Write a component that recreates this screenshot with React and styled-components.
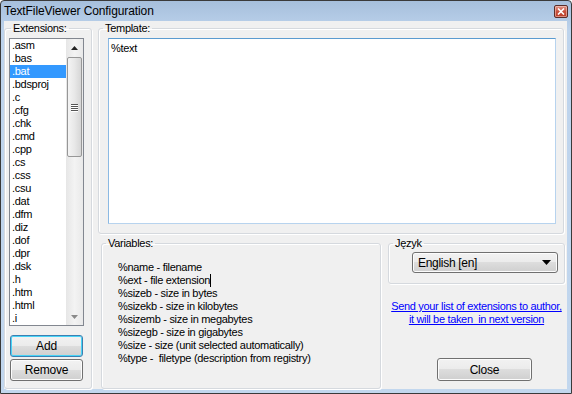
import React from "react";
import styled, { createGlobalStyle } from "styled-components";

const GlobalStyle = createGlobalStyle`
  html, body {
    margin: 0;
    padding: 0;
    background: #ffffff;
  }
  body {
    font-family: "Liberation Sans", Arial, sans-serif;
    font-size: 11px;
    letter-spacing: -0.3px;
    color: #000;
  }
`

const Window = styled.div`
  width: 572px;
  height: 394px;
  box-sizing: border-box;
  border: 1px solid #3a3a3a;
  border-radius: 4px 4px 0 0;
  background: linear-gradient(#a6bfdc, #bdd3ec 30px, #c2d7ee);
  display: flex;
  flex-direction: column;
  overflow: hidden;
`

const TitleBar = styled.div`
  height: 20px;
  display: flex;
  align-items: center;
  justify-content: space-between;
  padding: 0 3px 0 3px;
  font-size: 12px;
  letter-spacing: -0.1px;
  color: #000;
`

const CloseBox = styled.div`
  width: 14px;
  height: 13px;
  box-sizing: border-box;
  border: 1px solid #5b2e2a;
  border-radius: 2px;
  background: linear-gradient(#e0978b, #c8513d 50%, #b93c28);
  box-shadow: inset 0 0 0 1px rgba(255, 220, 210, 0.5);
  display: flex;
  align-items: center;
  justify-content: center;
  margin-top: 1px;
`

const Client = styled.div`
  flex: 1;
  margin: 0 4px 4px 3px;
  background: #f0f0f0;
  display: flex;
  padding-top: 1px;
  box-sizing: border-box;
`

const RightColumn = styled.div`
  margin-left: 6px;
  display: flex;
  flex-direction: column;
`

const Group = styled.fieldset`
  margin: 0 0 0 ${p => p.$ml || 0}px;
  padding: 0;
  min-width: 0;
  box-sizing: border-box;
  border: 1px solid #d5d9de;
  border-radius: 3px;
  box-shadow: inset 1px 1px 0 #fff, 1px 1px 0 #fff;
  width: ${p => p.$w}px;
  height: ${p => p.$h}px;
  display: flex;
  flex-direction: column;
`

const Legend = styled.legend`
  margin-left: ${p => p.$ml || 5}px;
  padding: 0 2px;
  line-height: 13px;
  font-size: 11px;
`

const Inner = styled.div`
  padding: ${p => p.$pad};
  display: flex;
  flex-direction: column;
  flex: 1;
`

const ListBox = styled.div`
  width: 75px;
  height: 288px;
  box-sizing: border-box;
  border: 1px solid #828790;
  background: #fff;
  display: flex;
`

const Items = styled.div`
  flex: 1;
  display: flex;
  flex-direction: column;
`

const Item = styled.div`
  height: 13px;
  line-height: 13px;
  padding-left: 2px;
  background: ${p => (p.$sel ? "#3399ff" : "transparent")};
  color: ${p => (p.$sel ? "#fff" : "#000")};
`

const ScrollBar = styled.div`
  width: 17px;
  background: linear-gradient(90deg, #e6e6e6, #f3f3f3 50%, #e9e9e9);
  display: flex;
  flex-direction: column;
  align-items: center;
`

const Arrow = styled.div`
  height: 17px;
  display: flex;
  align-items: center;
  justify-content: center;
`

const Track = styled.div`
  flex: 1;
  width: 100%;
  display: flex;
  flex-direction: column;
  align-items: center;
`

const Thumb = styled.div`
  width: 15px;
  height: 100px;
  margin-top: 1px;
  box-sizing: border-box;
  border: 1px solid #979797;
  border-radius: 2px;
  background: linear-gradient(90deg, #f4f4f4, #e8e8e8 50%, #d6d6d6);
  display: flex;
  flex-direction: column;
  align-items: center;
  justify-content: center;
  gap: 1px;
`

const Grip = styled.div`
  width: 7px;
  height: 1px;
  background: #555;
  box-shadow: 0 1px 0 #fff;
`

const Button = styled.button`
  box-sizing: border-box;
  width: ${p => p.$w}px;
  height: ${p => p.$h}px;
  margin: ${p => p.$m || 0};
  padding: 0;
  font-family: "Liberation Sans", Arial, sans-serif;
  font-size: 12px;
  letter-spacing: -0.2px;
  color: #000;
  border: 1px solid ${p => (p.$def ? "#3c7fb1" : "#707070")};
  border-radius: 3px;
  background: linear-gradient(#f2f2f2, #ebebeb 50%, #dddddd 50%, #cfcfcf);
  box-shadow: inset 0 0 0 1px ${p => (p.$def ? "#48d4f7" : "#fcfcfc")};
`

const TextArea = styled.div`
  width: 448px;
  height: 186px;
  box-sizing: border-box;
  background: #fff;
  border: 1px solid #b7d3ee;
  border-top-color: #5b9bd0;
  border-left-color: #8bb9e3;
  padding: 3px 2px;
  line-height: 13px;
`

const BottomRow = styled.div`
  display: flex;
  margin-top: 3px;
`

const VarLine = styled.div`
  height: 13px;
  line-height: 13px;
  white-space: pre;
`

const Caret = styled.span`
  display: inline-block;
  width: 1px;
  height: 13px;
  background: #000;
  vertical-align: top;
`

const SidePanel = styled.div`
  width: 177px;
  height: 152px;
  margin-left: 7px;
  display: flex;
  flex-direction: column;
`

const Select = styled.div`
  width: 146px;
  height: 21px;
  box-sizing: border-box;
  border: 1px solid #707070;
  border-radius: 3px;
  background: linear-gradient(#f2f2f2, #ebebeb 50%, #dddddd 50%, #cfcfcf);
  box-shadow: inset 0 0 0 1px #fcfcfc;
  display: flex;
  align-items: center;
  justify-content: space-between;
  padding: 0 6px 0 5px;
  font-size: 12px;
`

const Link = styled.a`
  margin-top: 16px;
  color: #0000ff;
  text-decoration: underline;
  text-align: center;
  line-height: 13px;
  white-space: pre;
  font-size: 11px;
  letter-spacing: -0.33px;
  cursor: pointer;
`

const extensions = [
  ".asm", ".bas", ".bat", ".bdsproj", ".c", ".cfg", ".chk", ".cmd", ".cpp",
  ".cs", ".css", ".csu", ".dat", ".dfm", ".diz", ".dof", ".dpr", ".dsk",
  ".h", ".htm", ".html", ".i",
]

const variables = [
  "%name - filename",
  "%ext - file extension",
  "%sizeb - size in bytes",
  "%sizekb - size in kilobytes",
  "%sizemb - size in megabytes",
  "%sizegb - size in gigabytes",
  "%size - size (unit selected automatically)",
  "%type -  filetype (description from registry)",
]

function App() {
  return (
    <>
      <GlobalStyle />
      <Window>
        <TitleBar>
          <span>TextFileViewer Configuration</span>
          <CloseBox>
            <svg width="8" height="7" viewBox="0 0 8 7">
              <path d="M1 0.5 L7 6.5 M7 0.5 L1 6.5" stroke="#fff" strokeWidth="1.6" />
            </svg>
          </CloseBox>
        </TitleBar>
        <Client>
          <Group $w={88} $h={367}>
            <Legend $ml={6}>Extensions:</Legend>
            <Inner $pad="3px 0 0 4px">
              <ListBox>
                <Items>
                  {extensions.map(e => (
                    <Item key={e} $sel={e === ".bat"}>{e}</Item>
                  ))}
                </Items>
                <ScrollBar>
                  <Arrow>
                    <svg width="7" height="4" viewBox="0 0 7 4">
                      <path d="M3.5 0 L7 4 L0 4 Z" fill="#222" />
                    </svg>
                  </Arrow>
                  <Track>
                    <Thumb>
                      <Grip />
                      <Grip />
                      <Grip />
                      <Grip />
                    </Thumb>
                  </Track>
                  <Arrow>
                    <svg width="7" height="4" viewBox="0 0 7 4">
                      <path d="M0 0 L7 0 L3.5 4 Z" fill="#8a8a8a" />
                    </svg>
                  </Arrow>
                </ScrollBar>
              </ListBox>
              <Button $def $w={73} $h={22} $m="9px 0 0 1px">Add</Button>
              <Button $w={73} $h={22} $m="2px 0 0 1px">Remove</Button>
            </Inner>
          </Group>
          <RightColumn>
            <Group $w={466} $h={212}>
              <Legend $ml={4}>Template:</Legend>
              <Inner $pad="3px 0 0 9px">
                <TextArea>%text</TextArea>
              </Inner>
            </Group>
            <BottomRow>
              <Group $w={280} $h={152} $ml={3}>
                <Legend $ml={4}>Variables:</Legend>
                <Inner $pad="11px 0 0 16px">
                  {variables.map((v, i) => (
                    <VarLine key={v}>
                      {v}
                      {i === 1 && <Caret />}
                    </VarLine>
                  ))}
                </Inner>
              </Group>
              <SidePanel>
                <Group $w={177} $h={47}>
                  <Legend $ml={4}>Język</Legend>
                  <Inner $pad="2px 0 0 23px">
                    <Select>
                      <span>English [en]</span>
                      <svg width="9" height="5" viewBox="0 0 9 5">
                        <path d="M0 0 L9 0 L4.5 5 Z" fill="#000" />
                      </svg>
                    </Select>
                  </Inner>
                </Group>
                <Link>
                  {"Send your list of extensions to author,\nit will be taken  in next version"}
                </Link>
                <Button $w={95} $h={23} $m="auto 0 8px 49px">Close</Button>
              </SidePanel>
            </BottomRow>
          </RightColumn>
        </Client>
      </Window>
    </>
  )
}

export default App
